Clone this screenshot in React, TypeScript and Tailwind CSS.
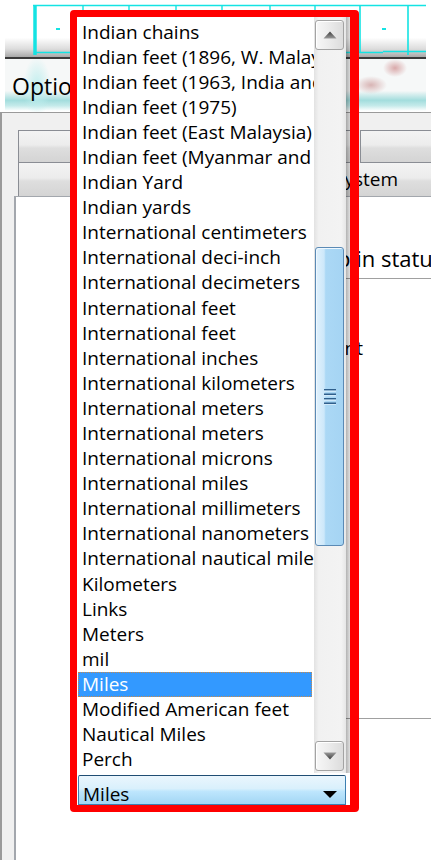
import React from "react";

const items = [
  "Indian chains",
  "Indian feet (1896, W. Malaysia)",
  "Indian feet (1963, India and Pakistan)",
  "Indian feet (1975)",
  "Indian feet (East Malaysia)",
  "Indian feet (Myanmar and Bangladesh)",
  "Indian Yard",
  "Indian yards",
  "International centimeters",
  "International deci-inch",
  "International decimeters",
  "International feet",
  "International feet",
  "International inches",
  "International kilometers",
  "International meters",
  "International meters",
  "International microns",
  "International miles",
  "International millimeters",
  "International nanometers",
  "International nautical miles",
  "Kilometers",
  "Links",
  "Meters",
  "mil",
  "Miles",
  "Modified American feet",
  "Nautical Miles",
  "Perch",
];

function Arrow({ up }: { up: boolean }) {
  return (
    <svg width="14" height="8" viewBox="0 0 14 8">
      <defs>
        <linearGradient id={up ? "ga" : "gb"} x1="0" y1="0" x2="0" y2="1">
          <stop offset="0" stopColor={up ? "#3c3c3c" : "#9a9a9a"} />
          <stop offset="1" stopColor={up ? "#9a9a9a" : "#3c3c3c"} />
        </linearGradient>
      </defs>
      {up ? (
        <polygon points="7,0.5 13.5,7.5 0.5,7.5" fill={`url(#ga)`} />
      ) : (
        <polygon points="0.5,0.5 13.5,0.5 7,7.5" fill={`url(#gb)`} />
      )}
    </svg>
  );
}

function ScrollButton({ up }: { up: boolean }) {
  return (
    <div className="h-[30px] ml-[1px] mr-[2px] rounded-[3px] border border-[#a3a3a3] bg-[linear-gradient(to_right,#f7f7f7_0%,#ececec_45%,#dcdcdc_100%)] shadow-[inset_1px_1px_0_#ffffff] flex items-center justify-center">
      <Arrow up={up} />
    </div>
  );
}

function Scrollbar() {
  return (
    <div className="w-[32px] flex flex-col bg-[linear-gradient(to_right,#e2e2e2_0%,#f1f1f1_15%,#f3f3f3_85%,#e6e6e6_100%)]">
      <div className="h-[3px]" />
      <ScrollButton up />
      <div className="h-[197px]" />
      <div className="h-[299px] ml-[1px] mr-[2px] rounded-[3px] border border-[#5b8ab5] bg-[linear-gradient(to_right,#e1f1fc_0%,#cde8fa_30%,#abd8f5_36%,#a5d4f3_100%)] shadow-[inset_1px_1px_0_#eef8ff] flex items-center justify-center">
        <svg width="16" height="17" viewBox="0 0 16 17">
          {[1, 5.5, 10, 14.5].map((y, i) => (
            <g key={i}>
              <rect x="2" y={y} width="12" height="1.6" fill="#2f5f8c" />
              <rect x="2" y={y + 1.6} width="12" height="1.2" fill="#d9eefc" />
            </g>
          ))}
        </svg>
      </div>
      <div className="h-[195px]" />
      <ScrollButton up={false} />
      <div className="h-[2px]" />
    </div>
  );
}

function Dropdown() {
  return (
    <div className="absolute left-[70px] top-[10px] w-[289px] h-[802px] rounded-[4px] border-t-[7px] border-l-[7px] border-b-[7px] border-r-[9px] border-[#ff0000] flex flex-col text-[19px] text-black">
      <div className="flex h-[756px]">
        <div className="w-[237px] bg-white overflow-hidden pt-[2.5px] pl-[1px] pr-[2px]">
          {items.map((t, i) =>
            i === 26 ? (
              <div
                key={i}
                className="h-[25.1px] leading-[25.1px] pl-[4px] whitespace-nowrap bg-[#3399ff] text-white outline-1 outline-dotted outline-[#c98a4b] -outline-offset-1"
              >
                {t}
              </div>
            ) : (
              <div key={i} className="h-[25.1px] leading-[25.1px] pl-[4px] whitespace-nowrap">
                {t}
              </div>
            )
          )}
        </div>
        <Scrollbar />
        <div className="w-[4px] bg-[linear-gradient(to_right,rgba(0,0,0,0.30),rgba(0,0,0,0.12))]" />
      </div>
      <div className="h-[2px] bg-white" />
      <div className="flex h-[30px] bg-white">
        <div className="w-[1px]" />
        <div className="w-[268px] border border-[#3c7fb1] border-t-[#1f4d73] rounded-t-[2px] bg-[linear-gradient(to_bottom,#eaf6fd_0%,#d9f0fc_45%,#bee6fd_55%,#a2d6f4_100%)] flex items-start pl-[4px] pr-[8px]">
          <span className="flex-1 leading-[25px] pt-[6px]">Miles</span>
          <svg width="14" height="7" viewBox="0 0 14 7" className="mt-[15px]">
            <polygon points="0,0 14,0 7,7" fill="#000" />
          </svg>
        </div>
        <div className="flex-1" />
      </div>
    </div>
  );
}

function TopBand() {
  const c = "#14e3e3";
  return (
    <div className="ml-[5px] w-[421px] h-[57px] bg-[linear-gradient(to_bottom,#ffffff_0%,#ffffff_66%,#dcdcdc_86%,#a8a8a8_100%)]">
      <svg width="421" height="57" viewBox="0 0 421 57">
        <line x1="28" y1="5.5" x2="421" y2="5.5" stroke={c} strokeWidth="1.6" />
        <line x1="30" y1="5" x2="30" y2="55" stroke={c} strokeWidth="3.5" />
        <line x1="355" y1="5" x2="355" y2="52" stroke={c} strokeWidth="1.6" />
        <line x1="403" y1="5" x2="403" y2="55" stroke={c} strokeWidth="1.6" />
        {[78, 124, 171, 217, 265, 310].map((x) => (
          <line key={x} x1={x} y1="5" x2={x} y2="13" stroke={c} strokeWidth="1.4" />
        ))}
        <line x1="30" y1="52.5" x2="378" y2="52.5" stroke={c} strokeWidth="1.6" />
        <line x1="378" y1="51.5" x2="421" y2="51.5" stroke={c} strokeWidth="1.6" />
        <rect x="51" y="28" width="4" height="2" fill={c} />
        <rect x="377" y="28" width="4" height="2" fill={c} />
      </svg>
    </div>
  );
}

function TitleArea() {
  return (
    <div className="ml-[5px] w-[421px] h-[53px] flex items-center pl-[7px] bg-[radial-gradient(ellipse_14px_30px_at_32px_28px,#bfeeee_0%,transparent_100%),radial-gradient(ellipse_12px_9px_at_390px_9px,#d9a9aa_0%,transparent_100%),radial-gradient(ellipse_16px_9px_at_366px_26px,#d8b4b4_0%,transparent_100%),linear-gradient(to_bottom,transparent_0%,transparent_60%,#a3dddd_78%,#c4eaea_88%,#ffffff_98%)] bg-[#f6f8f8]">
      <span className="text-[23px] leading-[30px] text-black">Options</span>
    </div>
  );
}

function Tab({ className, children }: { className: string; children?: React.ReactNode }) {
  return (
    <div
      className={
        "border border-[#8a8d94] bg-[linear-gradient(to_bottom,#f3f3f3_0%,#ececec_45%,#dedede_55%,#d4d4d4_100%)] " +
        className
      }
    >
      {children}
    </div>
  );
}

export default function App() {
  return (
    <div className="relative w-[431px] h-[867px] overflow-hidden bg-white font-['Open_Sans',sans-serif]">
      <TopBand />
      <div className="ml-[5px] w-[421px] h-[2px] bg-[#3a3a3a]" />
      <TitleArea />
      <div className="flex h-[748px]">
        <div className="w-[9px] bg-[#fafafa]" />
        <div className="flex-1 border-l-2 border-t border-[#9a9a9a] bg-[#f0f0f0] flex flex-col">
          <div className="h-[17px]" />
          <div className="flex h-[33px] ml-[16px] gap-[2px]">
            <Tab className="w-[340px]" />
            <Tab className="flex-1 border-r-0" />
          </div>
          <Tab className="h-[33px] ml-[16px] border-t-0 border-b-0 border-r-0 pl-[315px] text-[19px] leading-[33px] text-black whitespace-nowrap">
            System
          </Tab>
          <div className="flex-1 ml-[12px] bg-white border-l-2 border-t border-[#a3a7ad] flex flex-col text-[19px] text-black">
            <div className="h-[49px]" />
            <div className="h-[25px] leading-[25px] pl-[321px] text-[22px] whitespace-nowrap">p in status bar</div>
            <div className="h-[7px]" />
            <div className="h-px ml-[200px] bg-[#a0a0a0]" />
            <div className="h-[30px]" />
            <div className="h-[25px] leading-[25px] w-[327px] text-right whitespace-nowrap">Use default format</div>
            <div className="h-[1.5px]" />
            <div className="h-[25px] leading-[25px] w-[347px] text-right whitespace-nowrap">Use decimal point</div>
            <div className="h-[357px]" />
            <div className="h-px ml-[200px] bg-[#a0a0a0]" />
          </div>
        </div>
      </div>
      <Dropdown />
    </div>
  );
}
